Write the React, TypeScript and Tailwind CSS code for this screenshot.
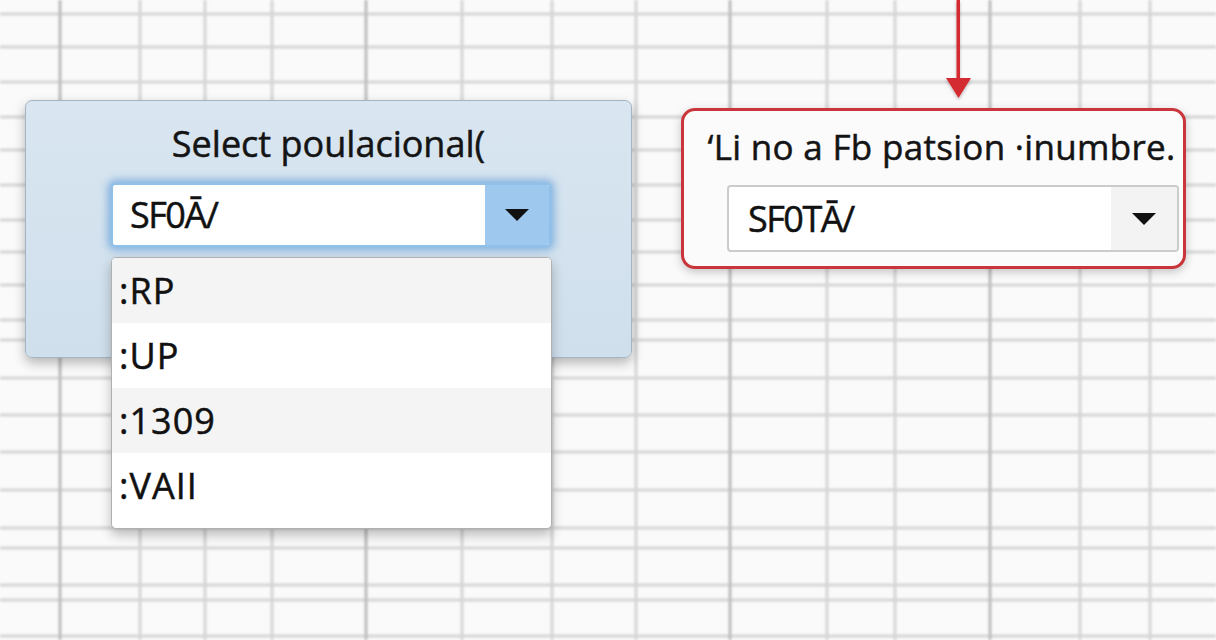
import React from "react";

const hLines = [14, 47, 82, 117, 150, 185, 220, 252, 285, 320, 340, 378, 415, 452, 490, 528, 548, 585, 600, 636];
const vLines: [number, boolean][] = [
  [60, true], [140, false], [205, false], [272, false], [366, true], [462, false], [552, false],
  [636, false], [730, true], [827, false], [895, false], [990, true], [1080, false], [1150, false],
];

function GridBackground() {
  return (
    <svg className="absolute inset-0" width="1216" height="640" viewBox="0 0 1216 640">
      <defs>
        <filter id="blur" x="-10%" y="-10%" width="120%" height="120%">
          <feGaussianBlur stdDeviation="1.3" />
        </filter>
      </defs>
      <rect width="1216" height="640" fill="#fafafa" />
      <g filter="url(#blur)">
        {hLines.map((y) => (
          <line key={"h" + y} x1="0" x2="1216" y1={y} y2={y} stroke="#d6d6d6" strokeWidth="3" />
        ))}
        {vLines.map(([x, dark]) => (
          <line key={"v" + x} y1="0" y2="640" x1={x} x2={x} stroke={dark ? "#bdbdbd" : "#d6d6d6"} strokeWidth="3" />
        ))}
      </g>
    </svg>
  );
}

function Caret() {
  return (
    <svg width="26" height="14" viewBox="0 0 26 14">
      <path d="M1 1 L25 1 L13 13 Z" fill="#111" />
    </svg>
  );
}

const font = { fontFamily: '"Open Sans", "Noto Sans", sans-serif' };

export default function App() {
  const items = [
    { t: ":RP", bg: "bg-[#f4f4f4]" },
    { t: ":UP", bg: "bg-white" },
    { t: ":1309", bg: "bg-[#f4f4f4]" },
    { t: ":VAII", bg: "bg-white" },
  ];
  return (
    <div className="relative w-[1216px] h-[640px] overflow-hidden" style={font}>
      <GridBackground />
      {/* red arrow */}
      <svg className="absolute left-[944px] top-0" width="30" height="104" viewBox="0 0 30 104">
        <defs>
          <filter id="ash" x="-50%" y="-20%" width="200%" height="140%">
            <feDropShadow dx="0" dy="2" stdDeviation="1.5" floodColor="#000" floodOpacity="0.25" />
          </filter>
        </defs>
        <g filter="url(#ash)">
          <rect x="12.5" y="0" width="3.5" height="84" fill="#d42a32" />
          <path d="M2 78 L27 78 L14.5 98 Z" fill="#d42a32" />
        </g>
      </svg>

      <div className="relative flex items-start pt-[100px] pl-[25px] gap-[49px]">
        {/* Left panel */}
        <div className="relative w-[607px] h-[258px] rounded-[7px] border border-[#a3b4c4] bg-gradient-to-b from-[#d9e6f1] to-[#cfdfec] shadow-[0_5px_12px_rgba(0,0,0,0.28)]">
          <div className="pt-[20px] text-center text-[36px] leading-[46px] text-[#141414] tracking-[0px] [-webkit-text-stroke:0.5px_#141414]">
            Select poulacional(
          </div>
          <div className="relative ml-[85px] mt-[16px] w-[440px]">
            <div className="flex h-[64px] rounded-[4px] border-2 border-[#8ec0ea] bg-white shadow-[0_0_9px_3px_rgba(70,140,210,0.6)] overflow-hidden">
              <div className="flex-1 flex items-center pl-[17px] text-[36px] text-[#111] tracking-[-1.5px] [-webkit-text-stroke:0.5px_#111]">SF0Ā/</div>
              <div className="w-[64px] flex items-center justify-center bg-[#9fc8ee]">
                <Caret />
              </div>
            </div>
            {/* dropdown list */}
            <div className="absolute left-0 top-[74px] w-[441px] rounded-[5px] border border-[#b0b0b0] bg-white shadow-[0_6px_12px_rgba(0,0,0,0.25)] overflow-hidden pb-[10px]">
              {items.map((it) => (
                <div key={it.t} className={`h-[65px] flex items-center pl-[7px] text-[36px] text-[#111] tracking-[1px] [-webkit-text-stroke:0.5px_#111] ${it.bg}`}>
                  {it.t}
                </div>
              ))}
            </div>
          </div>
        </div>

        {/* Right panel */}
        <div className="mt-[8px] w-[505px] h-[161px] rounded-[14px] border-[3px] border-[#c9353b] bg-[#fbfbfb] shadow-[0_3px_10px_rgba(0,0,0,0.22)]">
          <div className="pt-[13px] text-center text-[35px] leading-[46px] text-[#141414] tracking-[0.3px] pl-[16px] [-webkit-text-stroke:0.5px_#141414]">
            ‘Li no a Fb patsion ·inumbre.
          </div>
          <div className="ml-[43px] mt-[15px] w-[452px] h-[67px] flex rounded-[4px] border-2 border-[#cbcbcb] bg-white overflow-hidden">
            <div className="flex-1 flex items-center pl-[19px] text-[36px] text-[#111] tracking-[-1.5px] [-webkit-text-stroke:0.5px_#111]">SF0TĀ/</div>
            <div className="w-[66px] flex items-center justify-center bg-[#f3f3f3]">
              <Caret />
            </div>
          </div>
        </div>
      </div>
    </div>
  );
}
